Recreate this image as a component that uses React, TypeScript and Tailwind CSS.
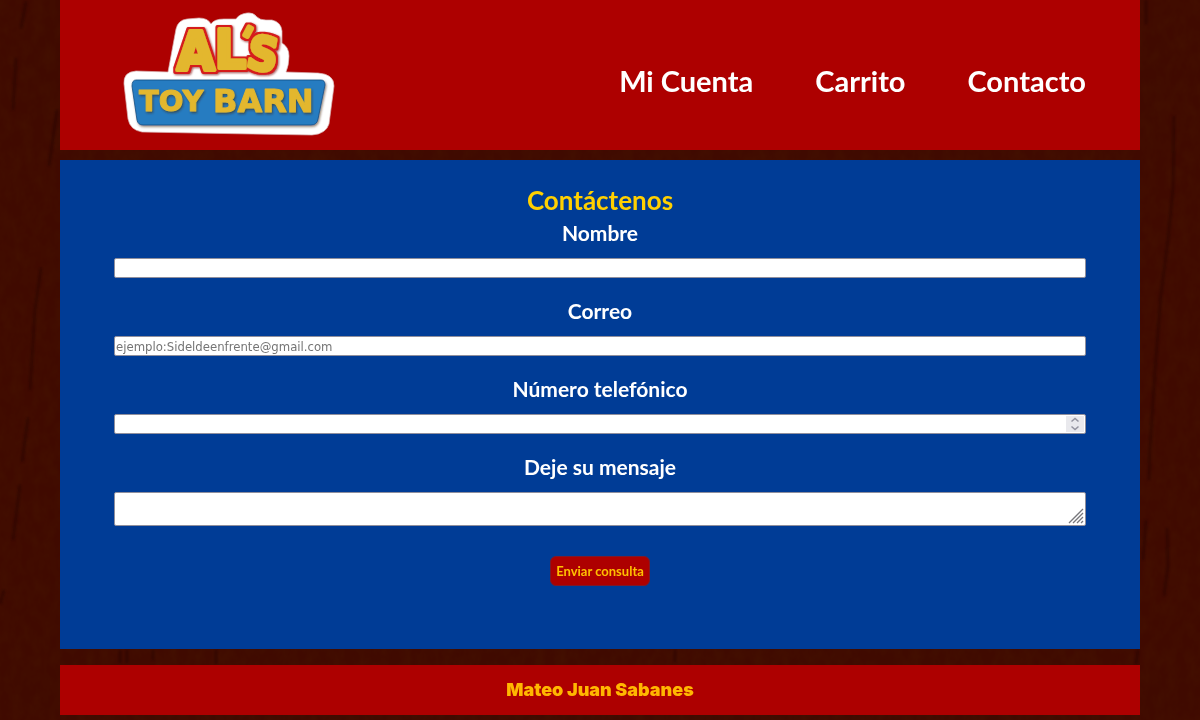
import type { ReactNode } from "react";

const display = "font-['Lato',sans-serif] font-bold";
const control =
  "block w-full rounded-[2px] border border-[#8f8f9d] bg-white px-px font-['DejaVu_Sans_Condensed','Noto_Sans',sans-serif] text-[13px] text-black placeholder:text-[#757575]";

function WoodBackground() {
  return (
    <svg className="fixed inset-0 -z-10 h-full w-full" preserveAspectRatio="none" viewBox="0 0 1200 720" aria-hidden="true">
      <defs>
        <filter id="grain" x="0" y="0" width="100%" height="100%">
          <feTurbulence type="fractalNoise" baseFrequency="0.09 0.06" numOctaves="3" seed="4" />
          <feColorMatrix values="0 0 0 0 0.08  0 0 0 0 0.02  0 0 0 0 0  0.9 0 0 0 -0.25" />
        </filter>
        <filter id="soft" x="-5%" y="-5%" width="110%" height="110%">
          <feGaussianBlur stdDeviation="1" />
        </filter>
      </defs>
      <rect width="1200" height="720" fill="#400a00" />
      <rect width="1200" height="720" filter="url(#grain)" opacity="0.35" />
      <g stroke="#1d0400" strokeWidth="2" fill="none" opacity="0.5" filter="url(#soft)">
        <path d="M26 2 21 28M16 58 13 110M57 110 49 166M41 268 35 310 30 390M28 418 22 462M20 485 13 540M4 590 0 604" />
        <path d="M1146 0V24M1174 116 1173 188 1168 240 1161 294 1155 370 1150 448 1149 480M1146 520 1143 560M1167 528 1168 566 1164 596M1138 650 1136 664" />
        <path d="M120 650V663M127 650V663M153 650V660M216 650V664M675 650V662" />
      </g>
    </svg>
  );
}

function Logo() {
  return (
    <svg className="h-[150px] w-[230px] shrink-0" viewBox="115 0 230 150" role="img" aria-label="Al's Toy Barn">
      <defs>
        <filter id="shade" x="-10%" y="-10%" width="120%" height="120%">
          <feDropShadow dx="1" dy="1.5" stdDeviation="0.8" floodColor="#402000" floodOpacity="0.55" />
        </filter>
        <filter id="rim" x="-10%" y="-20%" width="120%" height="140%">
          <feMorphology in="SourceAlpha" operator="dilate" radius="2" result="wide" />
          <feFlood floodColor="#d51c1c" />
          <feComposite in2="wide" operator="in" result="red" />
          <feOffset in="wide" dx="1" dy="1" result="low" />
          <feGaussianBlur in="low" stdDeviation="0.8" result="blur" />
          <feFlood floodColor="#7a1010" floodOpacity="0.7" />
          <feComposite in2="blur" operator="in" result="shadow" />
          <feMerge>
            <feMergeNode in="shadow" />
            <feMergeNode in="red" />
            <feMergeNode in="SourceGraphic" />
          </feMerge>
        </filter>
      </defs>
      <path
        d="M168 72 176 29Q178 20 187 19L199 18Q208 18 211 24 214 19 224 19H236Q239 14 247 13 253 12 257 17 260 20 266 20H272Q281 22 282 31L282 43Q289 47 289 56 289 65 286 72L318 73Q334 74 334 86L329 124Q326 134 312 135L252 134 196 133 142 132Q130 130 128 119L124 84Q123 72 136 71Z"
        fill="#fff"
        stroke="#d9b3b3"
        strokeWidth="0.7"
      />
      <path
        d="M136 80H321Q325 80 325 85L318 119Q317 125 311 125H143Q138 125 137 120L132 86Q132 80 136 80Z"
        fill="#257bc1"
        stroke="#155183"
        strokeWidth="0.8"
        filter="url(#shade)"
      />
      <g
        fontFamily="'DejaVu Sans Condensed', 'DejaVu Sans', sans-serif"
        fontWeight="700"
        fontSize="54"
        strokeLinejoin="round"
        fill="#e3b72e"
        stroke="#e3b72e"
        strokeWidth="4"
        filter="url(#rim)"
      >
        <text x="177" y="70">A</text>
        <text x="215" y="68">L</text>
        <text x="245" y="53" fontSize="36" transform="rotate(28 249 28)">'</text>
        <text x="248" y="70" fontSize="46" transform="rotate(10 262 55)">S</text>
      </g>
      <g
        fontFamily="'DejaVu Sans', sans-serif"
        fontWeight="700"
        fontSize="29"
        fill="#e3b72e"
        stroke="#e3b72e"
        strokeWidth="1"
        strokeLinejoin="round"
        filter="url(#shade)"
      >
        <text x="139" y="111">TOY</text>
        <text x="213" y="112" fontSize="32">BARN</text>
      </g>
    </svg>
  );
}

function Field({ id, label, children }: { id: string; label: string; children: ReactNode }) {
  return (
    <div className="mb-5">
      <label htmlFor={id} className={`${display} mb-3 block text-center text-[21px] leading-[26px] text-white`}>
        {label}
      </label>
      {children}
    </div>
  );
}

export default function App() {
  return (
    <div className="relative isolate min-h-screen px-[5%] pb-[5px]">
      <WoodBackground />
      <header className="flex items-center justify-between bg-[#ad0000] pl-[55px] pr-[5%]">
        <a href="#">
          <Logo />
        </a>
        <nav className={`${display} flex gap-[62px] pt-3 text-[29px] leading-10 text-white`}>
          <a href="#">Mi Cuenta</a>
          <a href="#">Carrito</a>
          <a href="#">Contacto</a>
        </nav>
      </header>

      <main className="mt-[10px] bg-[#003c96] px-[5%] pb-[63px] pt-5">
        <h1 className={`${display} text-center text-[26px] leading-10 text-[#ffd000]`}>Contáctenos</h1>
        <form onSubmit={(e) => e.preventDefault()}>
          <Field id="nombre" label="Nombre">
            <input id="nombre" type="text" className={`${control} h-5`} />
          </Field>
          <Field id="correo" label="Correo">
            <input id="correo" type="email" placeholder="ejemplo:Sideldeenfrente@gmail.com" className={`${control} h-5`} />
          </Field>
          <Field id="telefono" label="Número telefónico">
            <div className="relative">
              <input
                id="telefono"
                type="number"
                className={`${control} h-5 [appearance:textfield] [&::-webkit-inner-spin-button]:appearance-none`}
              />
              <svg className="pointer-events-none absolute right-[2px] top-[2px] h-4 w-[18px] bg-[#e9e9ed]" viewBox="0 0 18 16" fill="none" stroke="#9494a0" strokeWidth="1.5" aria-hidden="true">
                <path d="M5.5 5.5 9 2.5 12.5 5.5M5.5 10.5 9 13.5 12.5 10.5" />
              </svg>
            </div>
          </Field>
          <Field id="mensaje" label="Deje su mensaje">
            <div className="relative">
              <textarea id="mensaje" className={`${control} h-[34px] resize-none`} />
              <svg className="pointer-events-none absolute bottom-[2px] right-[2px] h-4 w-4" viewBox="0 0 16 16" stroke="#77777c" strokeWidth="1.3" aria-hidden="true">
                <path d="M1 15 15 1M5 15 15 5M9 15 15 9M13 15 15 13" />
              </svg>
            </div>
          </Field>
          <div className="flex justify-center pt-[10px]">
            <button type="submit" className={`${display} h-[30px] w-[100px] rounded-[6px] border border-[#7d1a2a] bg-[#ad0000] text-[13px] leading-5 text-[#ffc000]`}>
              Enviar consulta
            </button>
          </div>
        </form>
      </main>

      <footer className="mt-4 bg-[#ad0000] py-3 text-center font-['Inter',sans-serif] text-[18px] font-black leading-[26px] text-[#ffb700]">
        Mateo Juan Sabanes
      </footer>
    </div>
  );
}
